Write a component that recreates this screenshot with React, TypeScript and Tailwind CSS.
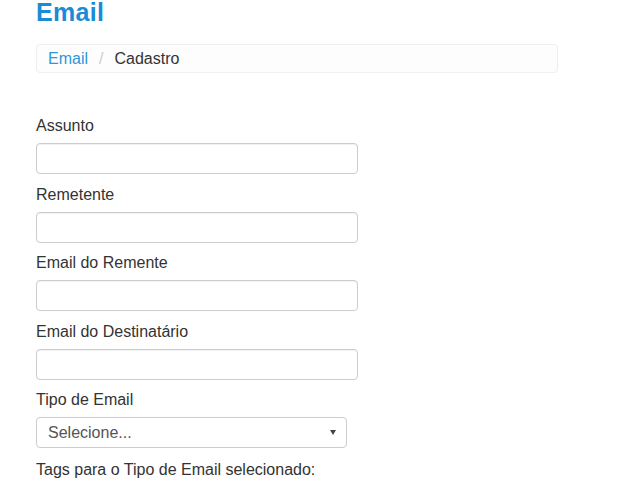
import React from "react";

const font = { fontFamily: '"Liberation Sans", Arial, sans-serif' };

function Field({ label, mb = "mb-[9.7px]" }: { label: string; mb?: string }) {
  return (
    <div>
      <label className="block text-[16px] leading-[22px] text-[#333] mb-[6px]">{label}</label>
      <div className={`h-[31px] w-[322px] rounded-[4px] border border-[#cccccc] bg-white shadow-[inset_0_1px_1px_rgba(0,0,0,0.06)] ${mb}`} />
    </div>
  );
}

export default function App() {
  return (
    <div className="min-h-[503px] w-[623px] bg-white pl-[36px] pt-[1px]" style={font}>
      <h1 className="m-0 text-[25px] font-bold leading-[22px] tracking-[0.3px] text-[#1a8bd6]">Email</h1>
      <div className="mt-[21px] flex h-[29px] w-[522px] items-center rounded-[4px] border border-[#efefef] bg-[#fdfdfd] pl-[11px] text-[16px] leading-[22px]">
        <span className="text-[#2f96da]">Email</span>
        <span className="mx-[11px] text-[#cccccc]">/</span>
        <span className="text-[#333]">Cadastro</span>
      </div>
      <div className="pt-[42px]">
        <Field label="Assunto" />
        <Field label="Remetente" />
        <Field label="Email do Remente" />
        <Field label="Email do Destinatário" mb="mb-[9px]" />
        <div>
          <label className="block text-[16px] leading-[22px] text-[#333] mb-[6px]">Tipo de Email</label>
          <div className="flex h-[31px] w-[311px] items-center justify-between rounded-[4px] border border-[#cccccc] bg-white pl-[11px] pr-[10px] mb-[11px]">
            <span className="text-[16px] text-[#555]">Selecione...</span>
            <svg width="6" height="5" viewBox="0 0 6 5">
              <path d="M0 0 L6 0 L3 5 Z" fill="#444" />
            </svg>
          </div>
        </div>
        <div className="text-[16px] leading-[22px] text-[#333]">Tags para o Tipo de Email selecionado:</div>
      </div>
    </div>
  );
}
